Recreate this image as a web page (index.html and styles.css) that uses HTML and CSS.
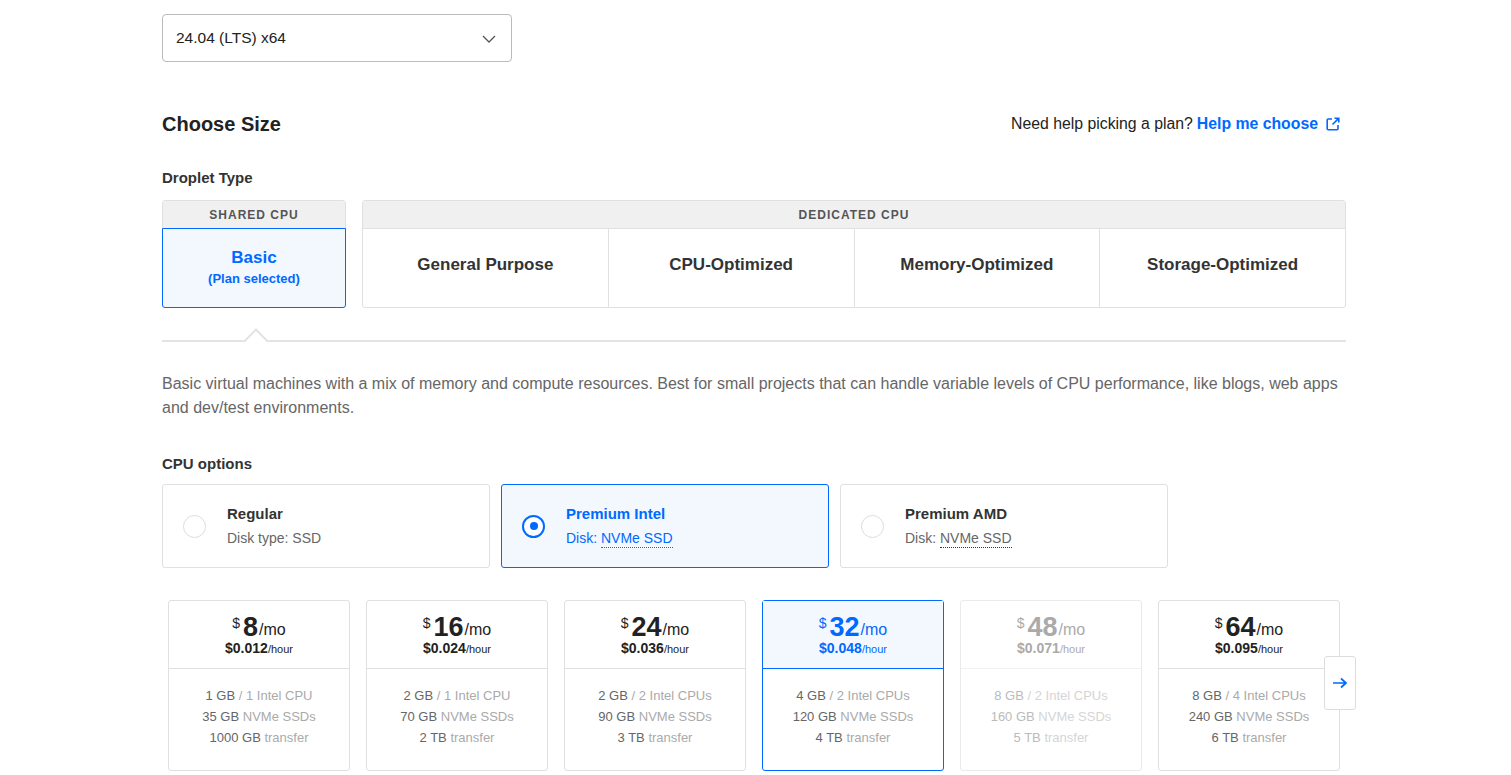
FILE: index.html
```html
<!DOCTYPE html>
<html>
<head>
<meta charset="utf-8">
<link rel="stylesheet" href="styles.css">
</head>
<body>
<div class="page">
  <div class="select">
    <span>24.04 (LTS) x64</span>
    <svg class="chev" width="14" height="8" viewBox="0 0 14 8"><path d="M1 1l6 6 6-6" fill="none" stroke="#555" stroke-width="1.3"/></svg>
  </div>

  <div class="head-row">
    <h2 class="title">Choose Size</h2>
    <div class="help">Need help picking a plan? <a class="help-link">Help me choose
      <svg width="14" height="14" viewBox="0 0 14 14" class="ext"><path d="M6 2H2.2a1 1 0 0 0-1 1v8.8a1 1 0 0 0 1 1H11a1 1 0 0 0 1-1V8" fill="none" stroke="#0069ff" stroke-width="1.6"/><path d="M8.5 1.2h4.3v4.3M12.6 1.4L6.5 7.5" fill="none" stroke="#0069ff" stroke-width="1.6"/></svg></a></div>
  </div>

  <div class="label">Droplet Type</div>

  <div class="types">
    <div class="group shared">
      <div class="ghead">SHARED CPU</div>
      <div class="cells">
        <div class="cell selected">
          <div class="cell-name">Basic</div>
          <div class="cell-sub">(Plan selected)</div>
        </div>
      </div>
    </div>
    <div class="group dedicated">
      <div class="ghead">DEDICATED CPU</div>
      <div class="cells">
        <div class="cell"><div class="cell-name big">General Purpose</div></div>
        <div class="cell"><div class="cell-name big">CPU-Optimized</div></div>
        <div class="cell"><div class="cell-name big">Memory-Optimized</div></div>
        <div class="cell"><div class="cell-name big">Storage-Optimized</div></div>
      </div>
    </div>
  </div>

  <div class="rule"></div>

  <p class="desc">Basic virtual machines with a mix of memory and compute resources. Best for small projects that can handle variable levels of CPU performance, like blogs, web apps and dev/test environments.</p>

  <div class="label cpu-label">CPU options</div>

  <div class="cpu-opts">
    <div class="opt">
      <span class="radio"></span>
      <div class="opt-text">
        <div class="opt-title">Regular</div>
        <div class="opt-sub">Disk type: SSD</div>
      </div>
    </div>
    <div class="opt active">
      <span class="radio on"></span>
      <div class="opt-text">
        <div class="opt-title">Premium Intel</div>
        <div class="opt-sub">Disk: <span class="dotted">NVMe SSD</span></div>
      </div>
    </div>
    <div class="opt">
      <span class="radio"></span>
      <div class="opt-text">
        <div class="opt-title">Premium AMD</div>
        <div class="opt-sub">Disk: <span class="dotted">NVMe SSD</span></div>
      </div>
    </div>
  </div>

  <div class="plans">
    <div class="plan">
      <div class="plan-top">
        <div class="price"><span class="cur">$</span><span class="amt">8</span><span class="per">/mo</span></div>
        <div class="hour">$0.012<span>/hour</span></div>
      </div>
      <div class="plan-spec">
        <div>1 GB <span>/ 1 Intel CPU</span></div>
        <div>35 GB <span>NVMe SSDs</span></div>
        <div>1000 GB <span>transfer</span></div>
      </div>
    </div>
    <div class="plan">
      <div class="plan-top">
        <div class="price"><span class="cur">$</span><span class="amt">16</span><span class="per">/mo</span></div>
        <div class="hour">$0.024<span>/hour</span></div>
      </div>
      <div class="plan-spec">
        <div>2 GB <span>/ 1 Intel CPU</span></div>
        <div>70 GB <span>NVMe SSDs</span></div>
        <div>2 TB <span>transfer</span></div>
      </div>
    </div>
    <div class="plan">
      <div class="plan-top">
        <div class="price"><span class="cur">$</span><span class="amt">24</span><span class="per">/mo</span></div>
        <div class="hour">$0.036<span>/hour</span></div>
      </div>
      <div class="plan-spec">
        <div>2 GB <span>/ 2 Intel CPUs</span></div>
        <div>90 GB <span>NVMe SSDs</span></div>
        <div>3 TB <span>transfer</span></div>
      </div>
    </div>
    <div class="plan chosen">
      <div class="plan-top">
        <div class="price"><span class="cur">$</span><span class="amt">32</span><span class="per">/mo</span></div>
        <div class="hour">$0.048<span>/hour</span></div>
      </div>
      <div class="plan-spec">
        <div>4 GB <span>/ 2 Intel CPUs</span></div>
        <div>120 GB <span>NVMe SSDs</span></div>
        <div>4 TB <span>transfer</span></div>
      </div>
    </div>
    <div class="plan disabled">
      <div class="plan-top">
        <div class="price"><span class="cur">$</span><span class="amt">48</span><span class="per">/mo</span></div>
        <div class="hour">$0.071<span>/hour</span></div>
      </div>
      <div class="plan-spec">
        <div>8 GB <span>/ 2 Intel CPUs</span></div>
        <div>160 GB <span>NVMe SSDs</span></div>
        <div>5 TB <span>transfer</span></div>
      </div>
    </div>
    <div class="plan">
      <div class="plan-top">
        <div class="price"><span class="cur">$</span><span class="amt">64</span><span class="per">/mo</span></div>
        <div class="hour">$0.095<span>/hour</span></div>
      </div>
      <div class="plan-spec">
        <div>8 GB <span>/ 4 Intel CPUs</span></div>
        <div>240 GB <span>NVMe SSDs</span></div>
        <div>6 TB <span>transfer</span></div>
      </div>
    </div>
    <button class="next">
      <svg width="16" height="12" viewBox="0 0 16 12"><path d="M1 6h13M9 1.5L14 6l-5 4.5" fill="none" stroke="#0069ff" stroke-width="1.7"/></svg>
    </button>
  </div>
</div>
</body>
</html>
```

FILE: styles.css
```css
* { box-sizing: border-box; }
html, body { margin: 0; padding: 0; background: #fff; }
body {
  font-family: "Liberation Sans", Arial, sans-serif;
  color: #333;
  font-size: 15px;
  height: 775px;
  overflow: hidden;
}
.page {
  width: 1184px;
  margin-left: 162px;
  padding-top: 14px;
}
.select {
  width: 350px;
  height: 48px;
  border: 1px solid #bbb;
  border-radius: 4px;
  display: flex;
  align-items: center;
  justify-content: space-between;
  padding: 0 15px 0 13px;
  font-size: 15.5px;
  color: #222;
}
.chev { margin-top: 1px; }
.head-row {
  display: flex;
  justify-content: space-between;
  align-items: center;
  margin-top: 48px;
  height: 28px;
}
.title {
  margin: 0;
  font-size: 20px;
  font-weight: bold;
  color: #222;
}
.help {
  font-size: 15.8px;
  color: #222;
  display: flex;
  align-items: center;
  gap: 4px;
  padding-right: 6px;
}
.help-link { color: #0069ff; font-weight: bold; display: flex; align-items: center; gap: 8px; }
.label {
  margin-top: 30px;
  font-size: 15px;
  font-weight: bold;
  color: #333;
  line-height: 20px;
}
.types {
  display: flex;
  gap: 16px;
  margin-top: 12px;
}
.group {
  border: 1px solid #e0e0e0;
  border-radius: 3px;
  display: flex;
  flex-direction: column;
}
.shared { width: 184px; }
.dedicated { flex: 1; }
.ghead {
  height: 28px;
  background: #f0f0f0;
  border-bottom: 1px solid #e0e0e0;
  font-size: 12px;
  font-weight: bold;
  letter-spacing: 1px;
  color: #555;
  display: flex;
  align-items: center;
  justify-content: center;
}
.cells { display: flex; height: 78px; }
.cell {
  flex: 1;
  display: flex;
  flex-direction: column;
  align-items: center;
  justify-content: center;
  border-left: 1px solid #e0e0e0;
  padding-bottom: 6px;
}
.cell:first-child { border-left: none; }
.cell.selected {
  background: #f3f8ff;
  border: 1px solid #0069ff;
  margin: -1px;
  border-radius: 0 0 3px 3px;
  padding-bottom: 2px;
}
.cell-name { font-size: 17px; font-weight: bold; color: #333; }
.cell.selected .cell-name { color: #0069ff; }
.cell-sub { font-size: 13px; font-weight: bold; color: #0069ff; margin-top: 3px; }
.rule {
  position: relative;
  height: 2px;
  background: #e3e3e3;
  margin-top: 32px;
}
.rule::after {
  content: "";
  position: absolute;
  left: 85px;
  top: -8px;
  width: 16px;
  height: 16px;
  background: #fff;
  border-top: 2px solid #e3e3e3;
  border-left: 2px solid #e3e3e3;
  transform: rotate(45deg);
}
.desc {
  margin: 30px 0 0;
  font-size: 16px;
  line-height: 24px;
  color: #666;
}
.cpu-label { margin-top: 34px; }
.cpu-opts {
  display: flex;
  gap: 11px;
  margin-top: 10px;
}
.opt {
  width: 328px;
  height: 84px;
  border: 1px solid #e0e0e0;
  border-radius: 3px;
  display: flex;
  align-items: center;
  padding-left: 20px;
  gap: 21px;
}
.opt.active { background: #f3f8ff; border-color: #0069ff; }
.radio {
  width: 23px;
  height: 23px;
  border-radius: 50%;
  border: 1px solid #ddd;
  background: #fff;
  flex: none;
  display: flex;
  align-items: center;
  justify-content: center;
}
.radio.on { border: 2px solid #0069ff; }
.radio.on::after {
  content: "";
  width: 8px;
  height: 8px;
  border-radius: 50%;
  background: #0069ff;
}
.opt-title { font-size: 15px; font-weight: bold; color: #333; line-height: 20px; }
.opt-sub { font-size: 14px; color: #666; line-height: 20px; margin-top: 4px; }
.opt.active .opt-title, .opt.active .opt-sub { color: #0069ff; }
.dotted { border-bottom: 1px dotted #333; padding-bottom: 1px; }
.opt.active .dotted { border-bottom-color: #0069ff; }
.plans {
  position: relative;
  display: flex;
  gap: 16px;
  margin-top: 32px;
  padding-left: 6px;
}
.plan {
  width: 182px;
  height: 171px;
  border: 1px solid #e0e0e0;
  border-radius: 3px;
  display: flex;
  flex-direction: column;
}
.plan-top {
  height: 68px;
  border-bottom: 1px solid #e0e0e0;
  display: flex;
  flex-direction: column;
  align-items: center;
  padding-top: 11px;
}
.price { display: flex; align-items: flex-start; color: #222; line-height: 30px; height: 30px; }
.cur { font-size: 14px; line-height: 22px; margin-right: 3px; }
.amt { font-size: 27px; font-weight: bold; }
.per { font-size: 16px; line-height: 36px; margin-left: 1px; }
.hour { font-size: 14px; font-weight: bold; color: #222; line-height: 16px; margin-top: -2px; }
.hour span { font-size: 11px; font-weight: normal; }
.plan-spec {
  padding-top: 16px;
  text-align: center;
  font-size: 13px;
  line-height: 21px;
  color: #666;
}
.plan-spec span { color: #aaa; }
.plan.chosen { border-color: #0069ff; }
.plan.chosen .plan-top { background: #f3f8ff; border-bottom-color: #0069ff; }
.plan.chosen .price, .plan.chosen .hour { color: #0069ff; }
.plan.disabled { border-color: #eaeaea; }
.plan.disabled .plan-top { border-bottom-color: #f0f0f0; }
.plan.disabled .price, .plan.disabled .hour { color: #aaa; }
.plan.disabled .plan-spec { color: #bbb; }
.plan.disabled .plan-spec span { color: #d5d5d5; }
.next {
  position: absolute;
  left: 1162px;
  top: 56px;
  width: 32px;
  height: 54px;
  background: #fff;
  border: 1px solid #ddd;
  border-radius: 3px;
  display: flex;
  align-items: center;
  justify-content: center;
  padding: 0;
}
```
